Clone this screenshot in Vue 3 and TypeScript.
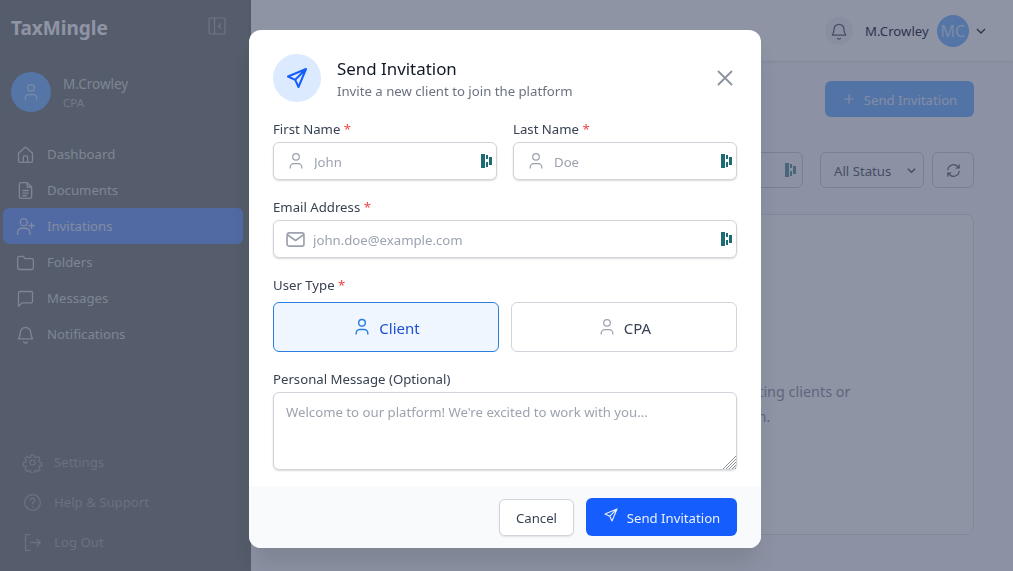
<script setup lang="ts">
const navItems = [
  { label: "Dashboard", icon: "M4 10.5 10.6 4.6a2 2 0 0 1 2.8 0L20 10.5V19a2 2 0 0 1-2 2H6a2 2 0 0 1-2-2zM9.5 21v-6a1.5 1.5 0 0 1 1.5-1.5h2a1.5 1.5 0 0 1 1.5 1.5v6" },
  { label: "Documents", icon: "M14 3H7a2 2 0 0 0-2 2v14a2 2 0 0 0 2 2h10a2 2 0 0 0 2-2V8zM14 3v5h5M9 12h6M9 15h6M9 18h4" },
  { label: "Invitations", icon: "M10 11a4 4 0 1 0 0-8 4 4 0 0 0 0 8zM3 21v-2a5 5 0 0 1 5-5h4a5 5 0 0 1 5 5v2M19 8v6M16 11h6", active: true },
  { label: "Folders", icon: "M3 7a2 2 0 0 1 2-2h4.5l2 2.500H19a2 2 0 0 1 2 2V18a2 2 0 0 1-2 2H5a2 2 0 0 1-2-2z" },
  { label: "Messages", icon: "M4 5.500A1.500 1.500 0 0 1 5.500 4h13A1.500 1.500 0 0 1 20 5.500v10a1.500 1.500 0 0 1-1.500 1.500H8l-4 4z" },
  { label: "Notifications", icon: "M6 10a6 6 0 1 1 12 0c0 5 2 6 2 7H4c0-1 2-2 2-7zM10 20.500a2.200 2.200 0 0 0 4 0" },
];

const bottomItems = [
  { label: "Settings", icon: "M10.300 3.300h3.400l.5 2.500 1.800.8 2.200-1.400 2.400 2.400-1.400 2.200.8 1.800 2.500.5v3.400l-2.500.5-.8 1.800 1.400 2.200-2.400 2.400-2.200-1.400-1.800.8-.5 2.500h-3.400l-.5-2.500-1.800-.8-2.200 1.400-2.400-2.400 1.400-2.200-.8-1.800-2.500-.5v-3.400l2.500-.5.8-1.800-1.400-2.200 2.400-2.400 2.200 1.400 1.800-.8zM12 9a3 3 0 1 0 0 6 3 3 0 0 0 0-6z" },
  { label: "Help & Support", icon: "M12 21a9 9 0 1 0 0-18 9 9 0 0 0 0 18zM9.500 9.500a2.500 2.500 0 1 1 3.600 2.200c-.8.4-1.100 1-1.100 1.800M12 17v.01" },
  { label: "Log Out", icon: "M9 3H4v18h5M10 12h11M17 8l4 4-4 4" },
];

const userIcon = "M12 11a4 4 0 1 0 0-8 4 4 0 0 0 0 8zM5 21v-1.500A4.500 4.500 0 0 1 9.500 15h5a4.500 4.500 0 0 1 4.500 4.500V21";
const sendIcon = "M21 3 3 10.500l7.200 3.300L13.500 21zM10.200 13.800 21 3";
</script>

<template>
  <div class="page">
    <aside class="sidebar">
      <div class="brand">
        <span class="logo">TaxMingle</span>
        <svg class="collapse" viewBox="0 0 18 18" fill="none" stroke="currentColor" stroke-width="1.200">
          <rect x="1" y="1" width="16" height="16" rx="1.500" />
          <path d="M6.500 1v16M13 6.500 10.500 9l2.500 2.500" />
        </svg>
      </div>
      <div class="profile">
        <div class="profile-avatar">
          <svg viewBox="0 0 24 24" fill="none" stroke="currentColor" stroke-width="1.500"><path :d="userIcon" /></svg>
        </div>
        <div class="profile-copy">
          <strong>M.Crowley</strong>
          <small>CPA</small>
        </div>
      </div>
      <nav class="nav">
        <a v-for="item in navItems" :key="item.label" class="nav-item" :class="{ active: item.active }">
          <svg viewBox="0 0 24 24" fill="none" stroke="currentColor" stroke-width="1.500" stroke-linejoin="round" stroke-linecap="round"><path :d="item.icon" /></svg>
          {{ item.label }}
        </a>
      </nav>
      <div class="bottom-nav">
        <a v-for="item in bottomItems" :key="item.label" class="bottom-item">
          <svg viewBox="0 0 24 24" fill="none" stroke="currentColor" stroke-width="1.500" stroke-linejoin="round" stroke-linecap="round"><path :d="item.icon" /></svg>
          {{ item.label }}
        </a>
      </div>
    </aside>

    <main class="main">
      <header class="topbar">
        <span class="bell">
          <svg viewBox="0 0 24 24" fill="none" stroke="currentColor" stroke-width="1.500" stroke-linejoin="round"><path d="M6 10a6 6 0 1 1 12 0c0 5 2 6 2 7H4c0-1 2-2 2-7zM10 20.500a2.200 2.200 0 0 0 4 0" /></svg>
        </span>
        <span class="top-name">M.Crowley</span>
        <span class="top-avatar">MC</span>
        <svg class="top-chevron" viewBox="0 0 12 12" fill="none" stroke="currentColor" stroke-width="1.400"><path d="M2 4l4 4 4-4" /></svg>
      </header>
      <div class="content">
        <div class="content-head">
          <button class="primary-under">
            <svg viewBox="0 0 16 16" fill="none" stroke="currentColor" stroke-width="1.400"><path d="M8 2.500v11M2.500 8h11" /></svg>
            Send Invitation
          </button>
        </div>
        <div class="filters">
          <div class="search"><i class="ext under-ext"><b /><b /><b /><b /></i></div>
          <div class="status">All Status
            <svg viewBox="0 0 12 12" fill="none" stroke="currentColor" stroke-width="1.600"><path d="M2 4l4 4 4-4" /></svg>
          </div>
          <div class="refresh">
            <svg viewBox="0 0 24 24" fill="none" stroke="currentColor" stroke-width="1.600" stroke-linecap="round" stroke-linejoin="round"><path d="M4 11a8 8 0 0 1 14-4.500L20 8.500M20 4v4.500h-4.500M20 13a8 8 0 0 1-14 4.500L4 15.500M4 20v-4.500h4.500" /></svg>
          </div>
        </div>
        <section class="empty">
          <p>Get started by sending your first invitation to your existing clients or<br />colleagues to join in the TaxMingle platform.</p>
        </section>
      </div>
    </main>

    <div class="overlay">
      <div class="modal" role="dialog">
        <div class="modal-head">
          <span class="modal-icon">
            <svg viewBox="0 0 24 24" fill="none" stroke="currentColor" stroke-width="2" stroke-linejoin="round" stroke-linecap="round"><path :d="sendIcon" /></svg>
          </span>
          <div class="modal-title">
            <h2>Send Invitation</h2>
            <p>Invite a new client to join the platform</p>
          </div>
          <svg class="close" viewBox="0 0 18 18" fill="none" stroke="currentColor" stroke-width="1.800" stroke-linecap="round"><path d="M2.500 2.500l13 13M15.500 2.500l-13 13" /></svg>
        </div>

        <form class="form" @submit.prevent>
          <div class="name-row">
            <div>
              <label>First Name <em>*</em></label>
              <div class="field">
                <svg class="field-icon" viewBox="0 0 24 24" fill="none" stroke="currentColor" stroke-width="1.500"><path :d="userIcon" /></svg>
                <input placeholder="John" />
                <i class="ext"><b /><b /><b /><b /></i>
              </div>
            </div>
            <div>
              <label>Last Name <em>*</em></label>
              <div class="field">
                <svg class="field-icon" viewBox="0 0 24 24" fill="none" stroke="currentColor" stroke-width="1.500"><path :d="userIcon" /></svg>
                <input placeholder="Doe" />
                <i class="ext"><b /><b /><b /><b /></i>
              </div>
            </div>
          </div>

          <div class="block email">
            <label>Email Address <em>*</em></label>
            <div class="field">
              <svg class="field-icon mail" viewBox="0 0 20 16" fill="none" stroke="currentColor" stroke-width="1.800" stroke-linejoin="round"><rect x="1" y="1" width="18" height="14" rx="2" /><path d="M1.500 3 10 9l8.500-6" /></svg>
              <input placeholder="john.doe@example.com" />
              <i class="ext"><b /><b /><b /><b /></i>
            </div>
          </div>

          <div class="block type">
            <label class="type-label">User Type <em>*</em></label>
            <div class="types">
              <button type="button" class="type-btn selected">
                <svg viewBox="0 0 24 24" fill="none" stroke="currentColor" stroke-width="1.700"><path :d="userIcon" /></svg>
                Client
              </button>
              <button type="button" class="type-btn">
                <svg viewBox="0 0 24 24" fill="none" stroke="currentColor" stroke-width="1.500"><path :d="userIcon" /></svg>
                CPA
              </button>
            </div>
          </div>

          <div class="block message">
            <label>Personal Message (Optional)</label>
            <div class="message-box">
              <textarea placeholder="Welcome to our platform! We're excited to work with you..."></textarea>
              <svg class="grip" viewBox="0 0 14 14" fill="none" stroke="#8b8f96" stroke-width="1"><path d="M1 14 14 1M4 14 14 4M7 14l7-7M10 14l4-4M13 14l1-1" /></svg>
            </div>
          </div>
        </form>

        <div class="modal-foot">
          <button type="button" class="cancel">Cancel</button>
          <button type="button" class="send">
            <svg viewBox="0 0 24 24" fill="none" stroke="currentColor" stroke-width="1.700" stroke-linejoin="round" stroke-linecap="round"><path :d="sendIcon" /></svg>
            Send Invitation
          </button>
        </div>
      </div>
    </div>
  </div>
</template>

<style>
html,
body {
  margin: 0;
  overflow: hidden;
}
</style>

<style scoped>
.page {
  display: flex;
  height: 571px;
  width: 1013px;
  background: #f9fafb;
  color: #374151;
  font-family: "Noto Sans", "Open Sans", sans-serif;
  font-size: 13.2px;
}

.sidebar {
  width: 251px;
  flex: none;
  display: flex;
  flex-direction: column;
  background: #8a8f8a;
  color: #dde0dc;
}

.brand {
  height: 54px;
  box-sizing: border-box;
  padding: 0 25px 0 11px;
  display: flex;
  align-items: center;
  justify-content: space-between;
  border-bottom: 1px solid #8f948f;
}

.logo {
  font-size: 19px;
  font-weight: 700;
  color: #fff;
  padding-top: 2px;
}

.collapse {
  width: 18px;
  height: 18px;
  margin-top: -2px;
  color: #bcc0bc;
}

.profile {
  display: flex;
  align-items: center;
  gap: 12px;
  padding: 18px 11px 0;
}

.profile-avatar {
  width: 40px;
  height: 40px;
  border-radius: 50%;
  background: #88c0ff;
  display: grid;
  place-items: center;
  color: #dbeafe;
}

.profile-avatar svg {
  width: 20px;
  height: 20px;
}

.profile-copy {
  display: grid;
  gap: 1px;
}

.profile-copy strong {
  font-weight: 400;
  line-height: 20px;
  font-size: 13.5px;
}

.profile-copy small {
  font-size: 11.5px;
  line-height: 16px;
  opacity: 0.7;
}

.nav {
  margin-top: 24px;
  padding: 0 8px 0 3px;
}

.nav-item {
  height: 36px;
  display: flex;
  align-items: center;
  gap: 11px;
  padding-left: 12px;
  border-radius: 6px;
}

.nav-item svg {
  width: 21px;
  height: 21px;
}

.nav-item.active {
  background: #82aafc;
  color: #e6ecf7;
}

.bottom-nav {
  margin-top: auto;
  padding: 0 0 9px 22px;
}

.bottom-item {
  height: 40px;
  display: flex;
  align-items: center;
  gap: 11px;
  color: #b4b8b2;
}

.bottom-item svg {
  width: 21px;
  height: 21px;
}

.main {
  flex: 1;
  min-width: 0;
}

.topbar {
  height: 61px;
  box-sizing: border-box;
  display: flex;
  align-items: center;
  padding: 0 0 0 574px;
  background: #fff;
  box-shadow: 0 1px 3px rgba(0, 0, 0, 0.1);
}

.bell {
  width: 28px;
  height: 28px;
  border-radius: 50%;
  background: #f3f4f6;
  display: grid;
  place-items: center;
  color: #6b7280;
  margin-right: 12px;
}

.bell svg {
  width: 20px;
  height: 20px;
}

.top-avatar {
  width: 32px;
  height: 32px;
  margin-left: 8px;
  border-radius: 50%;
  background: #88c0ff;
  color: #dbeafe;
  display: grid;
  place-items: center;
  font-size: 16px;
}

.top-chevron {
  width: 12px;
  height: 12px;
  margin-left: 6px;
}

.content {
  padding: 20px 39px 0 16px;
}

.content-head {
  display: flex;
  justify-content: flex-end;
}

.primary-under {
  width: 149px;
  height: 36px;
  padding-top: 2px;
  border: 0;
  border-radius: 6px;
  background: #84bcff;
  color: #e6eefc;
  font: inherit;
  display: flex;
  align-items: center;
  justify-content: center;
  gap: 8px;
}

.primary-under svg {
  width: 14px;
  height: 14px;
  margin-top: -2px;
}

.filters {
  margin-top: 35px;
  display: flex;
  gap: 8px;
}

.search,
.status,
.refresh {
  height: 36px;
  box-sizing: border-box;
  border: 1px solid #d1d5db;
  border-radius: 6px;
  display: flex;
  align-items: center;
}

.search {
  flex: 1;
  margin-right: 9px;
  justify-content: flex-end;
  padding-right: 6px;
}

.under-ext {
  opacity: 0.6;
}

.status {
  width: 104px;
  padding: 2px 6px 0 13px;
  justify-content: space-between;
  color: #6b7280;
}

.status svg {
  width: 11px;
  height: 11px;
  margin-top: -2px;
}

.refresh {
  width: 42px;
  justify-content: center;
  color: #6b7280;
}

.refresh svg {
  width: 17px;
  height: 17px;
}

.empty {
  margin-top: 26px;
  height: 321px;
  box-sizing: border-box;
  background: #fff;
  border: 1px solid #e5e7eb;
  border-radius: 8px;
  padding-top: 164px;
  text-align: center;
  color: #9ca3af;
}

.empty p {
  margin: 0;
  font-size: 14.4px;
  line-height: 25px;
}

.overlay {
  position: fixed;
  inset: 0;
  background: rgba(31, 41, 75, 0.5);
  backdrop-filter: blur(0.5px);
  display: flex;
  align-items: flex-start;
  padding: 30px 0 0 249px;
  box-sizing: border-box;
}

.modal {
  width: 512px;
  height: 518px;
  background: #fff;
  border-radius: 12px;
  display: flex;
  flex-direction: column;
  overflow: hidden;
  box-shadow: 0 20px 25px -5px rgba(0, 0, 0, 0.1);
}

.modal-head {
  display: flex;
  align-items: center;
  gap: 16px;
  padding: 24px 24px 0;
}

.modal-icon {
  width: 48px;
  height: 48px;
  flex: none;
  border-radius: 50%;
  background: #dbeafe;
  color: #155dfc;
  display: grid;
  place-items: center;
}

.modal-icon svg {
  width: 24px;
  height: 24px;
}

.modal-title {
  flex: 1;
}

.modal-title h2 {
  margin: 0;
  padding-top: 1px;
  font-size: 16.9px;
  font-weight: 400;
  line-height: 25px;
  color: #111827;
}

.modal-title p {
  margin: 0;
  font-size: 13.2px;
  line-height: 20px;
  color: #6b7280;
}

.close {
  width: 18px;
  height: 18px;
  margin-right: 3px;
  color: #8b93a1;
}

.form {
  flex: 1;
  padding: 17px 24px 0;
}

.name-row {
  display: grid;
  grid-template-columns: minmax(0, 1fr) minmax(0, 1fr);
  gap: 16px;
}

label {
  display: block;
  line-height: 20px;
  margin-bottom: 3px;
  color: #374151;
}

em {
  font-style: normal;
  color: #ef4444;
}

.field {
  height: 38px;
  box-sizing: border-box;
  display: flex;
  align-items: center;
  padding: 0 4px 0 12px;
  background: #fff;
  border: 1px solid #d1d5db;
  border-radius: 6px;
  box-shadow: 0 1px 2px rgba(0, 0, 0, 0.15);
}

.field-icon {
  width: 20px;
  height: 20px;
  flex: none;
  color: #9ca3af;
}

.field-icon.mail {
  width: 19px;
  height: 15px;
}

input {
  flex: 1;
  min-width: 0;
  border: 0;
  outline: 0;
  padding: 2px 0 0 8px;
  background: transparent;
  font: inherit;
  color: #111827;
}

input::placeholder,
textarea::placeholder {
  color: #9ca3af;
  opacity: 1;
}

.ext {
  width: 11px;
  height: 14px;
  flex: none;
  display: block;
  position: relative;
}

.ext b {
  position: absolute;
  background: #1f6b75;
}

.ext b:nth-child(1) {
  left: 0;
  top: 0;
  width: 4px;
  height: 14px;
}

.ext b:nth-child(2) {
  left: 5px;
  top: 1px;
  width: 2px;
  height: 4px;
}

.ext b:nth-child(3) {
  left: 5px;
  top: 8px;
  width: 2px;
  height: 5px;
}

.ext b:nth-child(4) {
  left: 8px;
  top: 3px;
  width: 3px;
  height: 8px;
}

.block.email {
  margin-top: 17px;
}

.block.type {
  margin-top: 17px;
}

.type-label {
  margin-bottom: 7px;
}

.types {
  display: grid;
  grid-template-columns: 226px 226px;
  gap: 12px;
}

.type-btn {
  height: 50px;
  padding-top: 2px;
  display: flex;
  align-items: center;
  justify-content: center;
  gap: 7px;
  background: #fff;
  border: 1px solid #d1d5db;
  border-radius: 6px;
  color: #374151;
  font: inherit;
  font-size: 15px;
}

.type-btn svg {
  width: 20px;
  height: 20px;
  margin-top: -2px;
  color: #9ca3af;
}

.type-btn.selected {
  background: #eff6ff;
  border-color: #2b7fe0;
  color: #1d4ed8;
}

.type-btn.selected svg {
  color: #2b7fe0;
}

.block.message {
  margin-top: 17px;
}

.message-box {
  position: relative;
}

textarea {
  display: block;
  width: 100%;
  height: 78px;
  box-sizing: border-box;
  padding: 9px 12px;
  background: #fff;
  border: 1px solid #d1d5db;
  border-radius: 6px;
  box-shadow: 0 1px 2px rgba(0, 0, 0, 0.15);
  font: inherit;
  line-height: 20px;
  outline: 0;
  resize: none;
}

.grip {
  position: absolute;
  right: 1px;
  bottom: 1px;
  width: 14px;
  height: 14px;
  pointer-events: none;
}

.modal-foot {
  height: 62px;
  box-sizing: border-box;
  display: flex;
  justify-content: flex-end;
  align-items: center;
  gap: 12px;
  padding: 0 24px;
  background: #f9fafb;
}

.cancel {
  width: 75px;
  height: 37px;
  padding-top: 2px;
  background: #fff;
  border: 1px solid #d1d5db;
  border-radius: 6px;
  box-shadow: 0 1px 2px rgba(0, 0, 0, 0.1);
  font: inherit;
  color: #374151;
}

.send {
  width: 151px;
  height: 38px;
  padding-top: 2px;
  border: 0;
  border-radius: 6px;
  background: #155dfc;
  color: #e8f0ff;
  font: inherit;
  display: flex;
  align-items: center;
  justify-content: center;
  gap: 8px;
}

.send svg {
  width: 16px;
  height: 16px;
  margin-top: -5px;
}
</style>
